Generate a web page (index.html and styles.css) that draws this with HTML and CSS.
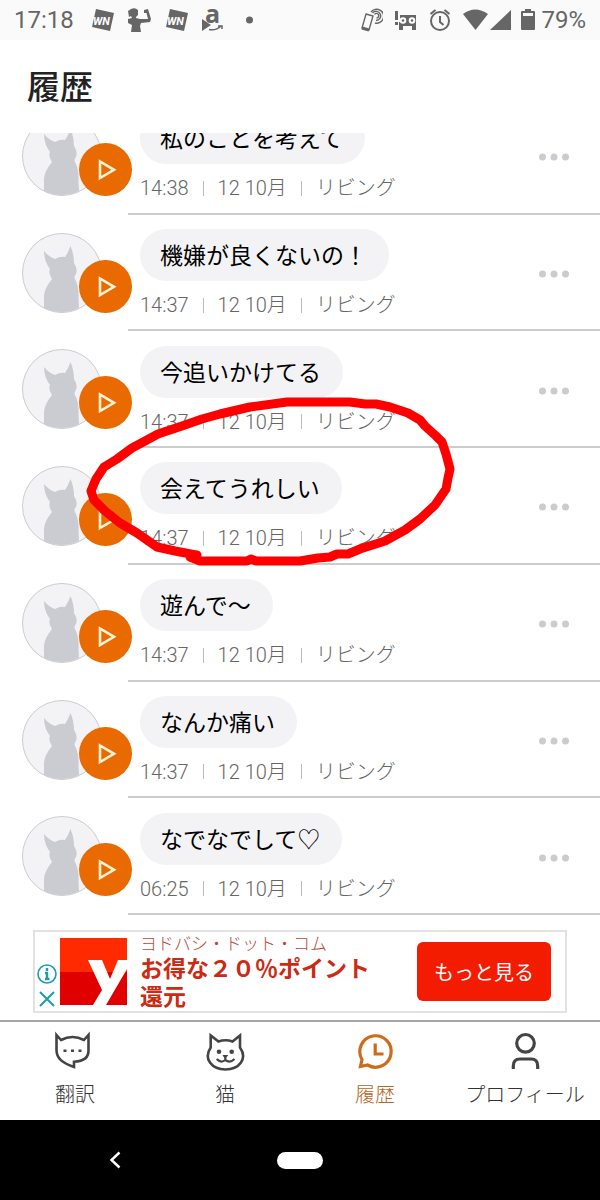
FILE: index.html
```html
<!DOCTYPE html>
<html lang="ja">
<head>
    <meta charset="UTF-8">
    <meta name="viewport" content="width=device-width, initial-scale=1.0">
    <title>履歴</title>
    <link rel="stylesheet" href="styles.css">
</head>

<body>
    <!-- Shared icons -->
    <svg class="sprite" aria-hidden="true">
        <symbol id="cat" viewBox="0 0 80 80">
            <circle cx="40" cy="40" r="39.5" fill="#f3f3f6" stroke="#ccccd0" />
            <path fill="#cbccd2" d="M22 18Q27 24 33 26Q38 23 43 24Q46 20 48.500 13Q52 21 52 30Q56 36 54 41Q51 44 54 48Q57 55 56.500 66L57 75Q40 83 22 75V63Q22 56 30 46Q26 40 28 36Q22 28 22 18Z" />
        </symbol>
        <symbol id="play" viewBox="0 0 53 53">
            <path d="M21 18.5V35L35 26.8Z" fill="none" stroke="#fff3d6" stroke-width="2.6" />
        </symbol>
        <symbol id="dots" viewBox="0 0 30 8">
            <circle cx="3.5" cy="4" r="3.5" />
            <circle cx="15" cy="4" r="3.5" />
            <circle cx="26.5" cy="4" r="3.5" />
        </symbol>
        <symbol id="news" viewBox="0 0 24 24">
            <path fill="#666" d="M5 1L23 5L19 23L1 19Z" />
            <text class="news-text" x="2" y="17">WN</text>
        </symbol>
    </svg>

    <!-- Status bar -->
    <div class="status-bar">
        <span>17:18</span>
        <div class="status-left">
            <svg width="24" height="24"><use href="#news" /></svg>
            <svg width="24" height="24" viewBox="0 0 24 24" fill="#666">
                <path d="M0 3L3 1Q7 -1 10 2V7L8 9V10L12 11L20 11L18.500 5H16V2L20 1L23 11L22 14L13 15L12 18L13 24H3L4 17L2 16L0 15V11L4 10L3 8L1 9Z" />
            </svg>
            <svg width="24" height="24"><use href="#news" /></svg>
            <svg width="24" height="24" viewBox="0 0 24 24" fill="#666">
                <text class="amazon-text" x="3" y="15">a</text>
                <path d="M0 11L9 17L0 23Z" />
                <path d="M7 21.500Q14 23 19 18M16 18H20V21" fill="none" stroke="#666" stroke-width="1.5" />
            </svg>
            <svg width="24" height="24" viewBox="0 0 24 24" fill="#666"><circle cx="10.500" cy="12" r="3.5" /></svg>
        </div>
        <div class="status-right">
            <svg width="24" height="24" viewBox="0 0 24 24" fill="none" stroke="#666" stroke-width="1.4">
                <path d="M7 6L14 8L10 22L3 20Z" />
                <path d="M3 20L10 22" stroke-width="3" />
                <path d="M15.500 6.500A2.300 2.300 0 1 1 17.500 10M13.500 5A4.600 4.600 0 1 1 17 12.500M12 4A7 7 0 1 1 16 15" />
            </svg>
            <svg width="24" height="24" viewBox="0 0 24 24" fill="#666">
                <path d="M2 3H5V12H2ZM2 14H5V17H2ZM7 7H23V22H19V18H10V22H6V14H7Z" />
                <circle cx="10" cy="12.500" r="2.300" stroke="#fff" stroke-width="2" />
                <circle cx="19" cy="12.500" r="2.300" stroke="#fff" stroke-width="2" />
            </svg>
            <svg width="24" height="24" viewBox="0 0 24 24" fill="none" stroke="#666" stroke-width="2">
                <circle cx="13" cy="13" r="9" />
                <path d="M13 8V14L16.500 17M3.500 6L8.500 2M22.500 6L17.500 2" />
            </svg>
            <svg width="50" height="24" viewBox="0 0 50 24" fill="#666">
                <path d="M2 6Q14 -3 27 6L14.500 22ZM29 22L50 2V22Z" />
            </svg>
            <svg width="14" height="24" viewBox="0 0 14 24">
                <path fill="#666" d="M4 1H10V3H13Q14 3 14 4V21Q14 22 13 22H1Q0 22 0 21V4Q0 3 1 3H4Z" />
                <path fill="#fafafa" d="M2 5H12V8H2Z" />
            </svg>
            <span>79%</span>
        </div>
    </div>

    <header class="page-header">
        <h1>履歴</h1>
    </header>

    <!-- History list -->
    <main class="history">
        <ul class="history-list">
            <li class="entry">
                <div class="avatar">
                    <svg width="80" height="80"><use href="#cat" /></svg>
                    <button class="play" aria-label="再生"><svg width="53" height="53"><use href="#play" /></svg></button>
                </div>
                <div class="entry-body">
                    <div class="entry-text">
                        <p class="bubble">私のことを考えて</p>
                        <p class="meta"><span>14:38</span><span>12 10月</span><span>リビング</span></p>
                    </div>
                    <button class="more" aria-label="メニュー"><svg width="30" height="8"><use href="#dots" /></svg></button>
                </div>
            </li>
            <li class="entry">
                <div class="avatar">
                    <svg width="80" height="80"><use href="#cat" /></svg>
                    <button class="play" aria-label="再生"><svg width="53" height="53"><use href="#play" /></svg></button>
                </div>
                <div class="entry-body">
                    <div class="entry-text">
                        <p class="bubble">機嫌が良くないの！</p>
                        <p class="meta"><span>14:37</span><span>12 10月</span><span>リビング</span></p>
                    </div>
                    <button class="more" aria-label="メニュー"><svg width="30" height="8"><use href="#dots" /></svg></button>
                </div>
            </li>
            <li class="entry">
                <div class="avatar">
                    <svg width="80" height="80"><use href="#cat" /></svg>
                    <button class="play" aria-label="再生"><svg width="53" height="53"><use href="#play" /></svg></button>
                </div>
                <div class="entry-body">
                    <div class="entry-text">
                        <p class="bubble">今追いかけてる</p>
                        <p class="meta"><span>14:37</span><span>12 10月</span><span>リビング</span></p>
                    </div>
                    <button class="more" aria-label="メニュー"><svg width="30" height="8"><use href="#dots" /></svg></button>
                </div>
            </li>
            <li class="entry">
                <div class="avatar">
                    <svg width="80" height="80"><use href="#cat" /></svg>
                    <button class="play" aria-label="再生"><svg width="53" height="53"><use href="#play" /></svg></button>
                </div>
                <div class="entry-body">
                    <div class="entry-text">
                        <p class="bubble">会えてうれしい</p>
                        <p class="meta"><span>14:37</span><span>12 10月</span><span>リビング</span></p>
                    </div>
                    <button class="more" aria-label="メニュー"><svg width="30" height="8"><use href="#dots" /></svg></button>
                </div>
            </li>
            <li class="entry">
                <div class="avatar">
                    <svg width="80" height="80"><use href="#cat" /></svg>
                    <button class="play" aria-label="再生"><svg width="53" height="53"><use href="#play" /></svg></button>
                </div>
                <div class="entry-body">
                    <div class="entry-text">
                        <p class="bubble">遊んで〜</p>
                        <p class="meta"><span>14:37</span><span>12 10月</span><span>リビング</span></p>
                    </div>
                    <button class="more" aria-label="メニュー"><svg width="30" height="8"><use href="#dots" /></svg></button>
                </div>
            </li>
            <li class="entry">
                <div class="avatar">
                    <svg width="80" height="80"><use href="#cat" /></svg>
                    <button class="play" aria-label="再生"><svg width="53" height="53"><use href="#play" /></svg></button>
                </div>
                <div class="entry-body">
                    <div class="entry-text">
                        <p class="bubble">なんか痛い</p>
                        <p class="meta"><span>14:37</span><span>12 10月</span><span>リビング</span></p>
                    </div>
                    <button class="more" aria-label="メニュー"><svg width="30" height="8"><use href="#dots" /></svg></button>
                </div>
            </li>
            <li class="entry">
                <div class="avatar">
                    <svg width="80" height="80"><use href="#cat" /></svg>
                    <button class="play" aria-label="再生"><svg width="53" height="53"><use href="#play" /></svg></button>
                </div>
                <div class="entry-body">
                    <div class="entry-text">
                        <p class="bubble">なでなでして♡</p>
                        <p class="meta"><span>06:25</span><span>12 10月</span><span>リビング</span></p>
                    </div>
                    <button class="more" aria-label="メニュー"><svg width="30" height="8"><use href="#dots" /></svg></button>
                </div>
            </li>
        </ul>

        <!-- Hand-drawn red circle -->
        <svg class="marker" width="390" height="190" viewBox="80 390 390 190" fill="none" stroke="#fe0000" stroke-width="9" stroke-linejoin="round" stroke-linecap="round" aria-hidden="true">
            <path d="M196 555L175 551L157 547L137 533L120 523L105 511L94 500L91 491L96 479L104 467L117 459L132 448L158 434L182 426L202 419L220 414L250 407L287 402H350L365 404L376 404L390 407L408 413L420 420L425 426L436 436L442 442L446 454L450 469L448 478L446 489L435 505L420 519L405 530L385 541L360 549L348 554L337 554L330 557L318 558L300 561H256L251 559L247 561H200L190 557L197 555" />
        </svg>
    </main>

    <!-- Ad banner -->
    <aside class="ad-area">
        <div class="ad">
            <div class="ad-marks">
                <svg width="20" height="20" viewBox="0 0 20 20" fill="none" stroke="#1f9ab0" stroke-width="1.600">
                    <circle cx="10" cy="10" r="9" />
                    <path d="M10 4V7M8 9H10V15M8 15H12.500" stroke-width="2.400" />
                </svg>
                <svg width="20" height="20" viewBox="0 0 20 20" fill="none" stroke="#1f9ab0" stroke-width="2">
                    <path d="M3 3L17 17M17 3L3 17" />
                </svg>
            </div>
            <svg width="67" height="67" viewBox="0 0 67 67">
                <rect width="67" height="67" fill="#e10000" />
                <rect width="67" height="34" fill="#ff2a00" />
                <path fill="#fff" d="M28 22H42L50 41L58 22H67V31L46 67H33L42 52Z" />
            </svg>
            <div class="ad-text">
                <p class="ad-name">ヨドバシ・ドット・コム</p>
                <p class="ad-title">お得な２０％ポイント還元</p>
            </div>
            <button class="ad-button">もっと見る</button>
        </div>
    </aside>

    <!-- Bottom tabs -->
    <nav class="tabs">
        <a href="#translate" class="tab">
            <svg width="40" height="40" viewBox="0 0 40 40" fill="none" stroke="#444" stroke-width="2.600">
                <path d="M1.500 4L6 9Q17.500 3 29 9L33.500 4V19Q34 30 19 30.700V36C8 32 1.500 28 1.500 19Z" />
                <path d="M8.500 19.700H11.500M16 19.700H19M23.500 19.700H26.500" />
            </svg>
            翻訳
        </a>
        <a href="#cats" class="tab">
            <svg width="40" height="40" viewBox="0 0 40 40" fill="none" stroke="#444" stroke-width="2.600">
                <path d="M5.700 16.500V4.500L13.500 10.500Q20.500 8 27.500 10.500L35 4.500V16.500C43 28 34 38.500 20.500 38.500C7 38.500 -2 28 5.700 16.500Z" />
                <path d="M11.700 28Q16 32.500 20.300 29Q25 32.500 29.500 28M20.300 29V25" stroke-width="2.200" />
                <path d="M18 24.500H22.600L20.300 27Z" fill="#444" stroke-width="1" />
                <circle cx="14" cy="20.700" r="2.300" fill="#444" stroke="none" />
                <circle cx="26.700" cy="20.700" r="2.300" fill="#444" stroke="none" />
            </svg>
            猫
        </a>
        <a href="#history" class="tab active">
            <svg width="40" height="40" viewBox="0 0 40 40" fill="none" stroke="#cd6b1b" stroke-width="3.200">
                <path d="M7 28.500A15.700 15.700 0 1 1 12.500 34L5.500 35.500Z" />
                <path d="M20.200 12.500V23H28.500" />
            </svg>
            履歴
        </a>
        <a href="#profile" class="tab">
            <svg width="40" height="40" viewBox="0 0 40 40" fill="none" stroke="#444" stroke-width="3.200">
                <circle cx="20.500" cy="12.300" r="8.800" />
                <path d="M8.300 38V35Q8.300 28 15 28H26Q32.700 28 32.700 35V38" />
            </svg>
            プロフィール
        </a>
    </nav>

    <!-- System navigation -->
    <div class="system-bar">
        <button class="back" aria-label="戻る">
            <svg width="12" height="18" viewBox="0 0 12 18" fill="none" stroke="#fff" stroke-width="2.400">
                <path d="M10.500 1.500L2.500 9L10.500 16.500" />
            </svg>
        </button>
        <button class="home" aria-label="ホーム"></button>
    </div>
</body>

</html>
```

FILE: styles.css
```css
/* General Styles */
* {
    box-sizing: border-box;
}

body {
    font-family: Roboto, "Noto Sans CJK JP", sans-serif;
    margin: 0;
    min-height: 100vh;
    display: flex;
    flex-direction: column;
    background-color: #fff;
    color: #222;
}

h1,
p,
ul {
    margin: 0;
    padding: 0;
}

button {
    border: none;
    padding: 0;
    background: none;
    font-family: inherit;
    cursor: pointer;
}

svg {
    display: block;
    flex-shrink: 0;
}

.sprite {
    position: absolute;
    width: 0;
    height: 0;
}

/* Status bar */
.status-bar {
    display: flex;
    align-items: center;
    height: 40px;
    padding: 0 14px;
    background-color: #fafafa;
    color: #666;
    font-size: 24px;
}

.status-left {
    display: flex;
    gap: 13px;
    margin-left: 17px;
}

.status-right {
    display: flex;
    align-items: center;
    gap: 10px;
    margin-left: auto;
}

.status-right span {
    margin-left: -4px;
}

.news-text {
    font: italic bold 11px Roboto, sans-serif;
    fill: #fff;
}

.amazon-text {
    font: bold 25px "Open Sans", sans-serif;
}

/* Page title */
.page-header {
    display: flex;
    align-items: center;
    height: 93px;
    padding: 3px 27px 0;
}

h1 {
    font-size: 33px;
    line-height: 48px;
    font-weight: 500;
}

/* History list, scrolled so that the first row is cut off */
.history {
    position: relative;
    flex: 1;
    display: flex;
    flex-direction: column;
    overflow: hidden;
}

.history-list {
    flex: 1;
    display: grid;
    grid-auto-rows: 1fr;
    margin-top: -35px;
    list-style: none;
}

.entry {
    display: flex;
    padding-left: 22px;
}

.avatar {
    position: relative;
    width: 106px;
    padding-top: 18px;
}

.play {
    position: absolute;
    top: 45px;
    left: 57px;
    width: 53px;
    height: 53px;
    border-radius: 50%;
    background-color: #e86a00;
}

.entry-body {
    flex: 1;
    display: flex;
    justify-content: space-between;
    align-items: center;
    padding: 4px 31px 0 12px;
    border-bottom: 2px solid #ccc;
}

.bubble {
    width: fit-content;
    padding: 3px 22px 0 20px;
    border-radius: 26px;
    background-color: #f3f3f6;
    color: #000;
    font-size: 23px;
    line-height: 49px;
}

.meta {
    display: flex;
    align-items: center;
    margin-top: 10px;
    color: #666;
    font-size: 20px;
    font-weight: 300;
    line-height: 28px;
}

.meta span + span {
    display: flex;
    align-items: center;
}

.meta span + span::before {
    content: "";
    width: 1px;
    height: 15px;
    margin: 0 14px;
    background-color: #bbb;
}

.more {
    fill: #cbccd0;
}

.marker {
    position: absolute;
    top: 257px;
    left: 80px;
    pointer-events: none;
}

/* Ad banner */
.ad-area {
    padding: 15px 33px 7px;
}

.ad {
    display: flex;
    align-items: center;
    height: 83px;
    padding: 0 14px 0 2px;
    border: 2px solid #e2e2e2;
}

.ad-marks {
    display: flex;
    flex-direction: column;
    gap: 5px;
    align-self: flex-end;
    margin-right: 3px;
    padding-bottom: 2px;
}

.ad-text {
    flex: 1;
    padding-left: 13px;
    color: #cc2a14;
}

.ad-name {
    color: #b8493a;
    font-size: 17px;
    font-weight: 300;
    line-height: 24px;
}

.ad-title {
    max-width: 240px;
    font-size: 23px;
    font-weight: 700;
    line-height: 28px;
}

.ad-button {
    width: 134px;
    height: 59px;
    border-radius: 6px;
    background-color: #f41c00;
    color: #fff;
    font-size: 20px;
}

/* Bottom tabs */
.tabs {
    display: grid;
    grid-template-columns: repeat(4, 1fr);
    height: 100px;
    padding-top: 9px;
    border-top: 2px solid #a6a6a6;
}

.tab {
    display: flex;
    flex-direction: column;
    align-items: center;
    gap: 8px;
    color: #333;
    font-size: 20px;
    font-weight: 300;
    line-height: 32px;
    text-decoration: none;
    white-space: nowrap;
}

.tab.active {
    color: #b8651f;
}

/* System navigation */
.system-bar {
    display: grid;
    grid-template-columns: 1fr 140px 1fr;
    place-items: center;
    height: 80px;
    background-color: #000;
}

.home {
    width: 46px;
    height: 17px;
    border-radius: 9px;
    background-color: #fff;
}
```
